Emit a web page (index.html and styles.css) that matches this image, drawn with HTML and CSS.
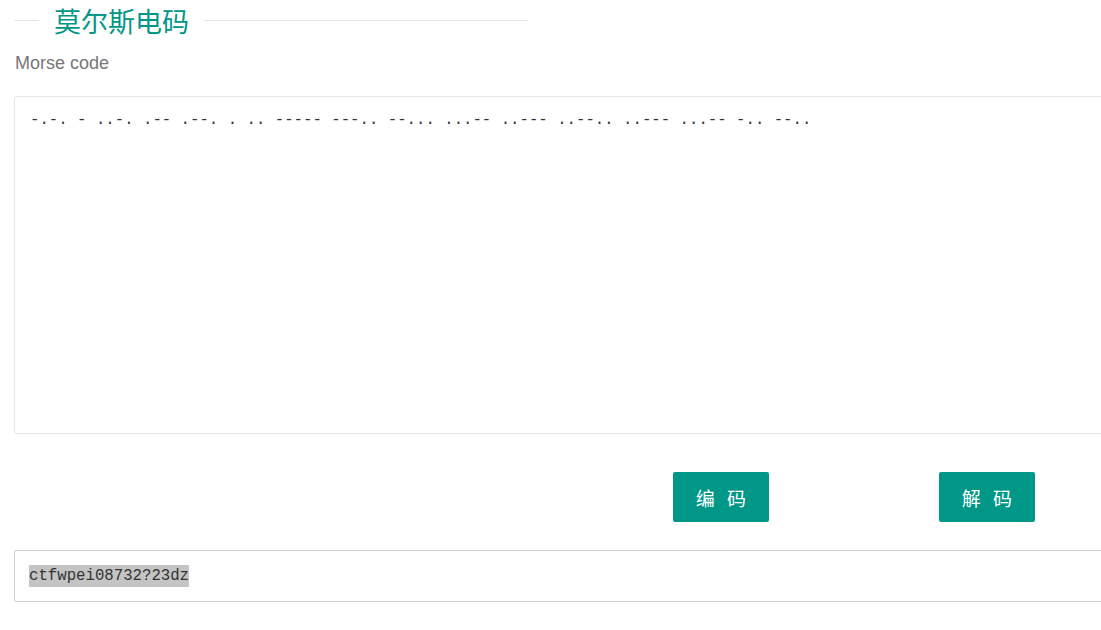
FILE: index.html
```html
<!DOCTYPE html>
<html lang="zh-CN">
<head>
    <meta charset="UTF-8">
    <meta name="viewport" content="width=device-width, initial-scale=1.0">
    <title>莫尔斯电码</title>
    <link rel="stylesheet" href="styles.css">
</head>
<body>
    <div class="page">
        <fieldset class="field-title">
            <legend>莫尔斯电码</legend>
        </fieldset>
        <div class="label">Morse code</div>
        <textarea class="code-area" id="morse">-.-. - ..-. .-- .--. . .. ----- ---.. --... ...-- ..--- ..--.. ..--- ...-- -.. --..</textarea>
        <div class="actions">
            <button class="btn">编 码</button>
            <button class="btn">解 码</button>
        </div>
        <div class="result"><span class="picked">ctfwpei08732?23dz</span></div>
    </div>
</body>
</html>
```

FILE: styles.css
```css
html, body {
    margin: 0;
    background-color: #fff;
    overflow: hidden;
}

body {
    font-family: "Liberation Sans", "Noto Sans CJK SC", sans-serif;
    color: #333;
}

.page {
    width: 1120px;
    padding: 0 0 0 14px;
}

.field-title {
    width: 514px;
    margin: 7px 0 0;
    padding: 0;
    border: none;
    border-top: 1px solid #e6e6e6;
    box-sizing: border-box;
}

.field-title legend {
    margin-left: 25px;
    padding: 0 15px;
    font-family: "Noto Sans CJK SC", sans-serif;
    font-size: 27px;
    line-height: 27px;
    font-weight: 400;
    color: #009688;
}

.label {
    margin-top: 19px;
    padding-left: 1px;
    font-size: 18px;
    line-height: 20px;
    color: #777;
}

.code-area {
    display: block;
    box-sizing: border-box;
    width: 1110px;
    height: 338px;
    margin-top: 23px;
    padding: 13px 15px;
    border: 1px solid #e6e6e6;
    border-radius: 2px;
    resize: none;
    outline: none;
    font-family: "Liberation Mono", monospace;
    font-size: 15.7px;
    line-height: 20px;
    color: #333;
}

.actions {
    display: flex;
    gap: 170px;
    padding-left: 659px;
    margin-top: 38px;
}

.btn {
    width: 96px;
    height: 50px;
    padding: 0 0 0 4px;
    border: none;
    border-radius: 2px;
    background-color: #009688;
    color: #fff;
    font-family: "Noto Sans CJK SC", sans-serif;
    font-size: 19px;
    letter-spacing: 4px;
    cursor: pointer;
}

.result {
    display: flex;
    align-items: center;
    box-sizing: border-box;
    width: 1110px;
    height: 52px;
    margin-top: 28px;
    padding-left: 14px;
    border: 1px solid #d2d2d2;
    border-radius: 2px;
}

.picked {
    padding: 2px 0;
    background-color: #c4c4c4;
    font-family: "Liberation Mono", monospace;
    font-size: 15.7px;
    color: #333;
}
```
